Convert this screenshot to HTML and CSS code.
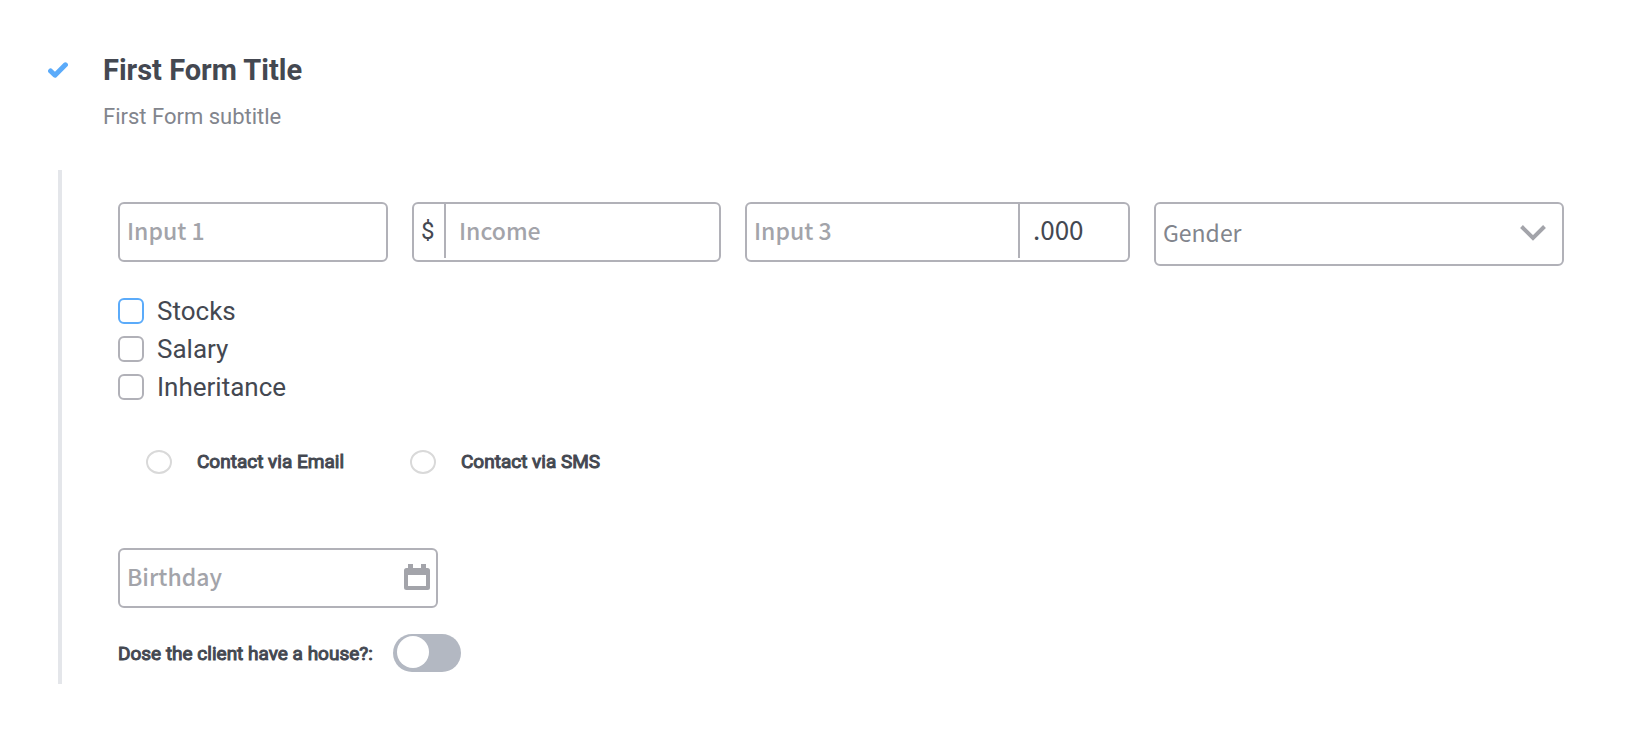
FILE: index.html
```
<!DOCTYPE html>
<html lang="en">
<head>
<meta charset="utf-8">
<title>First Form Title</title>
<link rel="stylesheet" href="styles.css">
</head>
<body>
<form class="step">
  <header class="step-header">
    <svg class="step-check" viewBox="0 0 20 16" aria-hidden="true"><path d="M2.6 9 7 13.2 17.4 2.8"/></svg>
    <div class="step-heading">
      <h1 class="step-title">First Form Title</h1>
      <p class="step-subtitle">First Form subtitle</p>
    </div>
  </header>

  <div class="step-body">
    <div class="fields">
      <div class="field">
        <input class="field-input" type="text" placeholder="Input 1" aria-label="Input 1">
      </div>
      <div class="field">
        <span class="field-prefix">$</span>
        <input class="field-input field-input-after" type="text" placeholder="Income" aria-label="Income">
      </div>
      <div class="field">
        <input class="field-input" type="text" placeholder="Input 3" aria-label="Input 3">
        <span class="field-suffix">.000</span>
      </div>
      <div class="field field-tall">
        <select class="field-select" aria-label="Gender">
          <option>Gender</option>
        </select>
        <svg class="chevron" viewBox="0 0 26 16" aria-hidden="true"><path d="M1.5 1.5 13 13 24.5 1.5"/></svg>
      </div>
    </div>

    <div class="checks">
      <label class="check"><input class="check-box check-box-active" type="checkbox">Stocks</label>
      <label class="check"><input class="check-box" type="checkbox">Salary</label>
      <label class="check"><input class="check-box" type="checkbox">Inheritance</label>
    </div>

    <div class="radios">
      <label class="radio"><input class="radio-dot" type="radio" name="contact">Contact via Email</label>
      <label class="radio"><input class="radio-dot" type="radio" name="contact">Contact via SMS</label>
    </div>

    <div class="field field-date">
      <input class="field-input" type="text" placeholder="Birthday" aria-label="Birthday">
      <svg class="calendar" viewBox="0 0 26 26" aria-hidden="true"><path fill-rule="evenodd" d="M4 0h5v4h8V0h5v4h1.500a2.500 2.500 0 0 1 2.500 2.500v17a2.500 2.500 0 0 1-2.500 2.500h-21A2.500 2.500 0 0 1 0 23.500v-17A2.500 2.500 0 0 1 2.500 4H4zM4 11v11h18V11z"/></svg>
    </div>

    <label class="toggle">Dose the client have a house?:<input class="toggle-switch" type="checkbox" role="switch"></label>
  </div>
</form>
</body>
</html>
```
FILE: styles.css
```
* {
  box-sizing: border-box;
}

body {
  margin: 0;
  background: #fff;
  color: #444851;
  font-family: Roboto, "Liberation Sans", sans-serif;
}

.step {
  padding: 50px 88px 52px 48px;
}

.step-header {
  display: flex;
  gap: 35px;
}

.step-check {
  width: 20px;
  height: 16px;
  margin-top: 12px;
  fill: none;
  stroke: #5babfa;
  stroke-width: 5;
  stroke-linecap: round;
  stroke-linejoin: round;
}

.step-title {
  margin: 0;
  font-size: 29px;
  line-height: 40px;
  font-weight: 700;
}

.step-subtitle {
  margin: 10px 0 0;
  font-size: 22px;
  line-height: 34px;
  color: #82858d;
}

.step-body {
  margin: 36px 0 0 10px;
  padding: 32px 0 12px 56px;
  border-left: 4px solid #e4e6ea;
}

.fields {
  display: grid;
  grid-template-columns: minmax(0, 270fr) minmax(0, 309fr) minmax(0, 385fr) minmax(0, 410fr);
  align-items: start;
  gap: 24px;
}

.field {
  display: flex;
  height: 60px;
  border: 2px solid #b1b1b8;
  border-radius: 6px;
  font-family: "Noto Sans CJK SC", sans-serif;
  font-size: 23px;
}

.field-tall {
  position: relative;
  height: 64px;
}

.field-input {
  flex: 1;
  min-width: 0;
  padding: 0 7px 4px;
  border: 0;
  background: none;
  color: #444851;
  font: inherit;
  outline: none;
}

.field-input-after {
  padding-left: 13px;
}

.field-input::placeholder {
  color: #a3a4aa;
  font-weight: 500;
  opacity: 1;
}

.field-prefix,
.field-suffix {
  height: 54px;
}

.field-prefix {
  width: 32px;
  padding-left: 7px;
  border-right: 2px solid #b1b1b8;
  font-family: Roboto, sans-serif;
  font-size: 24px;
  line-height: 54px;
}

.field-suffix {
  width: 110px;
  padding-left: 13px;
  border-left: 2px solid #b1b1b8;
  font-size: 26px;
  line-height: 50px;
}

.field-select {
  flex: 1;
  padding: 0 7px 4px;
  border: 0;
  background: none;
  color: #82858d;
  font: inherit;
  appearance: none;
}

.chevron {
  position: absolute;
  top: 21px;
  right: 16px;
  width: 26px;
  height: 16px;
  fill: none;
  stroke: #a3a4aa;
  stroke-width: 4;
  pointer-events: none;
}

.checks {
  display: flex;
  flex-direction: column;
  align-items: flex-start;
  margin-top: 26px;
}

.check {
  display: flex;
  align-items: center;
  gap: 13px;
  font-size: 26px;
  line-height: 38px;
}

.check-box {
  width: 26px;
  height: 26px;
  margin: 0;
  border: 2px solid #b1b1b8;
  border-radius: 6px;
  appearance: none;
}

.check-box-active {
  border-color: #5babfa;
}

.radios {
  display: flex;
  margin: 40px 0 0 28px;
}

.radio {
  display: flex;
  align-items: center;
  gap: 25px;
  width: 264px;
  font-size: 19px;
  line-height: 32px;
  -webkit-text-stroke: 1px currentColor;
}

.radio-dot {
  width: 26px;
  height: 24px;
  margin: 0;
  border: 2px solid #d9d9d9;
  border-radius: 50%;
  appearance: none;
}

.field-date {
  align-items: center;
  width: 320px;
  margin-top: 70px;
  padding-right: 6px;
}

.calendar {
  width: 26px;
  height: 26px;
  margin-bottom: 2px;
  fill: #a3a4aa;
}

.toggle {
  display: inline-flex;
  align-items: center;
  gap: 20px;
  margin-top: 26px;
  font-size: 19px;
  -webkit-text-stroke: 1px currentColor;
}

.toggle-switch {
  width: 68px;
  height: 38px;
  margin: 0;
  padding: 2px 4px;
  border-radius: 19px;
  background: #b3b8c2;
  appearance: none;
}

.toggle-switch::before {
  content: "";
  display: block;
  width: 32px;
  height: 32px;
  border-radius: 50%;
  background: #fff;
}

.toggle-switch:checked::before {
  margin-left: auto;
}
```
